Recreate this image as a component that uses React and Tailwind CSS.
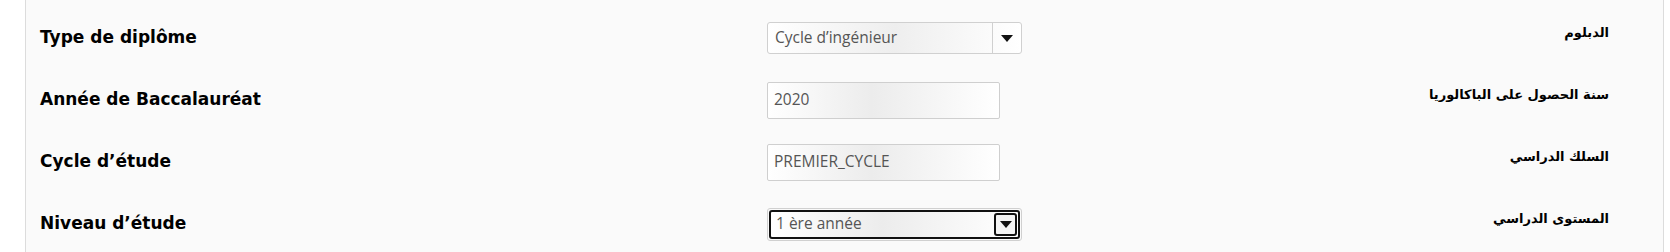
const rows = [
  { fr: "Type de diplôme", ar: "الدبلوم", kind: "select", value: "Cycle d’ingénieur" },
  { fr: "Année de Baccalauréat", ar: "سنة الحصول على الباكالوريا", kind: "input", value: "2020" },
  { fr: "Cycle d’étude", ar: "السلك الدراسي", kind: "input", value: "PREMIER_CYCLE" },
  { fr: "Niveau d’étude", ar: "المستوى الدراسي", kind: "focus", value: "1 ère année" },
];

function Caret() {
  return (
    <svg width="12" height="7" viewBox="0 0 12 7">
      <path d="M0 0 L12 0 L6 7 Z" fill="#111" />
    </svg>
  );
}

function Field({ kind, value }) {
  if (kind === "input") {
    return (
      <div className="flex h-[37px] w-[233px] items-center rounded-[2px] border border-[#cfcfcf] bg-[linear-gradient(90deg,#ffffff_0%,#ececec_45%,#ffffff_100%)] px-[6px] text-[15.5px] text-[#555]">
        {value}
      </div>
    );
  }
  if (kind === "focus") {
    return (
      <div className="h-[33px] w-[255px] rounded-[3px] border border-[#d0d0d0] p-[1px]">
        <div className="flex h-full items-center justify-between rounded-[3px] border-2 border-[#111] bg-[linear-gradient(90deg,#ffffff_0%,#ececec_45%,#ffffff_100%)] pl-[5px] pr-[1px] text-[15.5px] text-[#555]">
          <span>{value}</span>
          <span className="flex h-[23px] w-[23px] items-center justify-center rounded-[3px] border-2 border-[#111] bg-[#f4f4f4]">
            <Caret />
          </span>
        </div>
      </div>
    );
  }
  return (
    <div className="flex h-[32px] w-[255px] items-center justify-between rounded-[3px] border border-[#d0d0d0] bg-[linear-gradient(90deg,#ffffff_0%,#eeeeee_50%,#ffffff_100%)] text-[15.5px] text-[#555]">
      <span className="pl-[7px]">{value}</span>
      <span className="flex h-full w-[29px] items-center justify-center border-l border-[#d0d0d0]">
        <Caret />
      </span>
    </div>
  );
}

export default function App() {
  return (
    <div className="h-[252px] w-[1670px] bg-white font-['Open_Sans',sans-serif]">
      <div className="ml-[25px] h-full w-[1639px] border-x border-[#dcdcdc] bg-[#fafafa] pt-[7px]">
        {rows.map((row) => (
          <div key={row.fr} className="flex h-[62px] items-center">
            <div className="w-[741px] pl-[14px] font-['DejaVu_Sans',sans-serif] text-[17px] font-bold text-black">
              {row.fr}
            </div>
            <div className="flex-1">
              <Field kind={row.kind} value={row.value} />
            </div>
            <div
              dir="rtl"
              className="mb-[10px] pr-[54px] text-right font-['DejaVu_Sans',sans-serif] text-[13px] font-bold text-black"
            >
              {row.ar}
            </div>
          </div>
        ))}
      </div>
    </div>
  );
}
